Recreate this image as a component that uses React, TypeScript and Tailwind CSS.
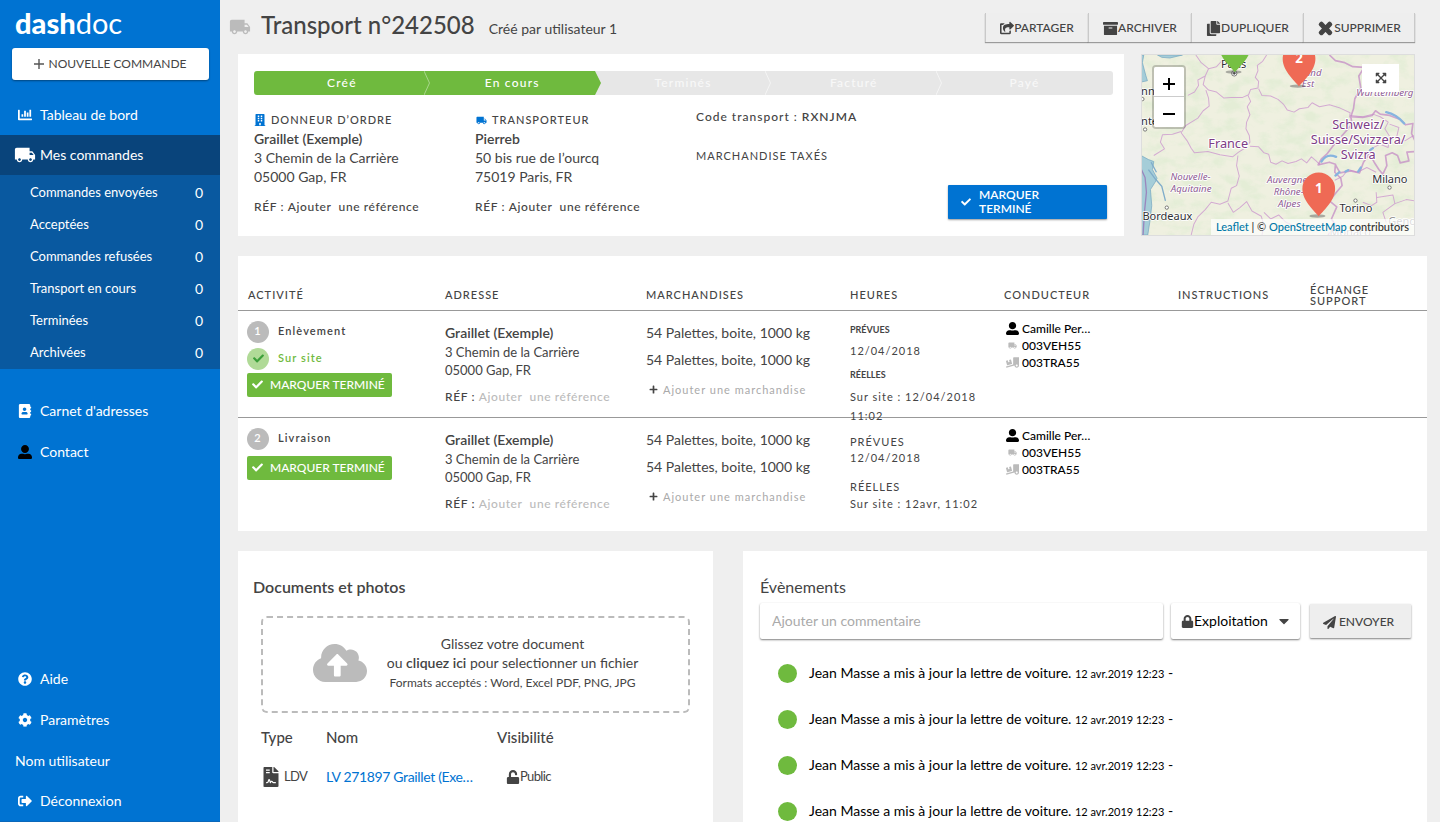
import type { ReactNode } from 'react'
import { clsx } from 'clsx'
import {
  FaAddressBook, FaArchive, FaBuilding, FaCaretDown, FaChartBar, FaCheck, FaCloudUploadAlt, FaCog, FaCopy,
  FaExpandArrowsAlt, FaFileContract, FaLock, FaPaperPlane, FaPlus, FaQuestionCircle, FaShareSquare, FaSignOutAlt,
  FaTimes, FaTruckLoading, FaUnlock, FaUserAlt,
} from 'react-icons/fa'
import { MdLocalShipping } from 'react-icons/md'

const orderLinks = [
  { label: 'Commandes envoyées', count: 0 },
  { label: 'Acceptées', count: 0 },
  { label: 'Commandes refusées', count: 0 },
  { label: 'Transport en cours', count: 0 },
  { label: 'Terminées', count: 0 },
  { label: 'Archivées', count: 0 },
]

const steps = [
  { label: 'Créé', done: true },
  { label: 'En cours', done: true },
  { label: 'Terminés', done: false },
  { label: 'Facturé', done: false },
  { label: 'Payé', done: false },
]

const activities = [
  { id: 1, label: 'Enlèvement', onSite: true },
  { id: 2, label: 'Livraison', onSite: false },
]

const events = [1, 2, 3, 4]

function NavLink({ icon, children, className }: { icon?: ReactNode; children: ReactNode; className?: string }) {
  return (
    <a href="#" className={clsx('flex items-center gap-[5px] px-[15px] text-sm text-white', className)}>
      {icon && <span className="flex w-5 shrink-0 justify-center">{icon}</span>}
      {children}
    </a>
  )
}

function Sidebar() {
  return (
    <aside className="flex h-screen w-[220px] shrink-0 flex-col bg-[#0073d2]">
      <a href="#" className="flex h-11 items-center pl-[15px] text-[29px] leading-none text-white">
        <span className="font-black">dash</span>doc
      </a>
      <button className="mt-1 mr-[11px] ml-3 flex h-8 items-center justify-center gap-1 rounded-[3px] bg-white text-xs text-[#444] shadow-[0_1px_2px_rgba(0,0,0,0.4)]">
        <svg viewBox="0 0 10 10" className="size-2.5" stroke="#555" strokeWidth="1.4"><path d="M5 0v10M0 5h10" /></svg>
        NOUVELLE COMMANDE
      </button>
      <nav className="mt-[15px] flex flex-1 flex-col">
        <NavLink className="h-10" icon={<FaChartBar size={14} />}>Tableau de bord</NavLink>
        <NavLink className="h-10 bg-[#09447b]" icon={<MdLocalShipping size={22} className="shrink-0" />}>Mes commandes</NavLink>
        <ul className="bg-[#0959a0] pt-px pb-px">
          {orderLinks.map(l => (
            <li key={l.label}>
              <a href="#" className="flex h-8 items-center justify-between pt-0.5 pr-[17px] pl-[30px] text-[13px] text-white">
                {l.label}
                <span className="text-sm">{l.count}</span>
              </a>
            </li>
          ))}
        </ul>
        <NavLink className="mt-[21px] h-[41px]" icon={<FaAddressBook size={14} />}>Carnet d'adresses</NavLink>
        <NavLink className="h-[41px]" icon={<FaUserAlt size={14} className="text-black" />}>Contact</NavLink>
        <div className="mt-auto">
          <NavLink className="h-[41px]" icon={<FaQuestionCircle size={14} />}>Aide</NavLink>
          <NavLink className="h-[41px]" icon={<FaCog size={14} />}>Paramètres</NavLink>
          <NavLink className="h-[41px]">Nom utilisateur</NavLink>
          <NavLink className="h-[41px] border-b border-[#0a68ba]" icon={<FaSignOutAlt size={14} />}>Déconnexion</NavLink>
        </div>
      </nav>
    </aside>
  )
}

function ActionButton({ icon, children, className }: { icon: ReactNode; children: ReactNode; className: string }) {
  return (
    <button className={clsx('flex h-[29px] items-center justify-center border-l border-[#c9c9c9] bg-[#eeeeee] pt-0.5 text-xs font-medium text-[#444] shadow-[0_1px_1px_rgba(0,0,0,0.35)]', className)}>
      {icon}
      {children}
    </button>
  )
}

function Header() {
  return (
    <header className="flex h-[54px] shrink-0 items-center pr-3">
      <MdLocalShipping size={22} className="-ml-[9px] shrink-0 text-[#bbb]" />
      <h1 className="ml-2.5 pb-1 text-2xl font-medium text-[#444]">Transport n°242508</h1>
      <p className="ml-3.5 pt-1 text-sm text-[#444]">Créé par utilisateur 1</p>
      <div className="ml-auto flex">
        <ActionButton className="w-[103px]" icon={<FaShareSquare size={14} />}>PARTAGER</ActionButton>
        <ActionButton className="w-[103px]" icon={<FaArchive size={15} />}>ARCHIVER</ActionButton>
        <ActionButton className="w-28" icon={<FaCopy size={15} />}>DUPLIQUER</ActionButton>
        <ActionButton className="w-28 border-r" icon={<FaTimes size={17} stroke="currentColor" strokeWidth={56} />}>SUPPRIMER</ActionButton>
      </div>
    </header>
  )
}

function ProgressBar() {
  return (
    <ol className="grid h-6 grid-cols-[176fr_171fr_171fr_171fr_171fr] overflow-hidden rounded-[3px]">
      {steps.map((s, i) => {
        const last = i === steps.length - 1
        const turning = s.done && !steps[i + 1]?.done
        return (
          <li
            key={s.label}
            className={clsx(
              'relative flex items-center justify-center text-xs font-medium tracking-widest',
              i > 0 && 'pr-1.5',
              s.done ? 'bg-[#6fba3e] text-white' : 'bg-[#e7e7e7] text-[#f8f8f8]',
            )}
          >
            {s.label}
            {!last && (
              <svg viewBox="0 0 6 24" className="absolute top-0 right-0 h-6 w-1.5" fill="none">
                {turning && <path d="M0 0L6 12L0 24H7V0Z" fill="#e7e7e7" />}
                {!turning && <path d="M0 0L5.5 12L0 24" stroke={s.done ? '#a9d68c' : '#f4f4f4'} />}
              </svg>
            )}
          </li>
        )
      })}
    </ol>
  )
}

function Party({ icon, role, name, street, city }: { icon: ReactNode; role: string; name: string; street: string; city: string }) {
  return (
    <div className="text-sm leading-[19px] text-[#444]">
      <h2 className="flex items-center gap-[5px] text-[11px] leading-[18px] font-medium tracking-[1px]">
        <span className="flex w-3 justify-center text-[#0073d2]">{icon}</span>
        {role}
      </h2>
      <p className="font-semibold">{name}</p>
      <p>{street}</p>
      <p>{city}</p>
      <p className="mt-[11px] text-xs leading-[19px] font-medium tracking-wider whitespace-pre">RÉF : <button>Ajouter  une référence</button></p>
    </div>
  )
}

function Summary() {
  return (
    <section className="min-w-0 flex-1 bg-white pt-[17px] pr-[11px] pb-[17px] pl-4">
      <ProgressBar />
      <div className="mt-4 grid grid-cols-[221px_221px_1fr_165px] text-[#444]">
        <Party icon={<FaBuilding size={12} />} role="DONNEUR D’ORDRE" name="Graillet (Exemple)" street="3 Chemin de la Carrière" city="05000 Gap, FR" />
        <Party icon={<MdLocalShipping size={11} />} role="TRANSPORTEUR" name="Pierreb" street="50 bis rue de l’ourcq" city="75019 Paris, FR" />
        <div>
          <p className="-mt-1 text-xs leading-[19px] font-medium tracking-[1px]">Code transport : <span className="font-semibold">RXNJMA</span></p>
          <p className="mt-5 text-[11px] leading-[19px] tracking-[1px]">MARCHANDISE TAXÉS</p>
        </div>
        <button className="mt-[74px] flex h-[34px] w-[159px] items-center gap-2 rounded-[1px] bg-[#0073d2] px-[13px] text-left text-xs leading-[14px] font-semibold text-white shadow-[0_1px_2px_rgba(0,0,0,0.4)]">
          <FaCheck size={10} className="shrink-0" />
          <span className="w-20">MARQUER TERMINÉ</span>
        </button>
      </div>
    </section>
  )
}

function Pin({ x, y, color, label }: { x: number; y: number; color: string; label?: string }) {
  return (
    <g transform={`translate(${x} ${y})`}>
      <ellipse cx="-4" cy="-1" rx="24" ry="5" fill="#555" opacity=".45" />
      <path d="M0 0C-8 -12 -49 -45 -49 -82A49 49 0 0 1 49 -82C49 -45 8 -12 0 0Z" fill={color} />
      {label && <text y="-69" textAnchor="middle" fontSize="40" fontWeight="700" fill="#fff">{label}</text>}
    </g>
  )
}

function RouteMap() {
  return (
    <section className="relative w-[274px] overflow-hidden border border-[#ddd] font-['Noto_Sans',sans-serif]">
      <svg viewBox="36 29 820 539" preserveAspectRatio="xMidYMid slice" className="absolute inset-0 size-full">
        <defs>
          <filter id="relief" x="0" y="0" width="100%" height="100%">
            <feTurbulence type="fractalNoise" baseFrequency="0.018 0.03" numOctaves="4" seed="7" />
            <feColorMatrix values="0 0 0 0 .7  0 0 0 0 .83  0 0 0 0 .62  0 3.4 0 0 -1.45" />
          </filter>
        </defs>
        <rect x="36" y="29" width="820" height="539" fill="#eff0e0" />
        <rect x="36" y="29" width="820" height="539" filter="url(#relief)" opacity=".5" />
        <g fill="#a5cdd8" stroke="#6fa3c0" strokeWidth="2">
          <path d="M36 29H44L40 52L50 90L55 106L36 110Z" />
          <path d="M85 29L98 36L122 38L160 29Z" />
          <path d="M36 330L58 342L74 348L70 372L84 398L78 410L64 432L68 480L62 530L56 568H36Z" />
        </g>
        <path d="M58 372L80 402L98 422L109 466M66 350L82 380" fill="none" stroke="#7facca" strokeWidth="4" />
        <path d="M36 370L48 396L52 440L46 500L42 568" fill="none" stroke="#9a86bd" strokeWidth="4" />
        <g fill="none" stroke="#cf9fd0" strokeWidth="3" strokeLinejoin="round" opacity=".85">
          <path d="M200 29L216 52L238 70L228 92L206 104L208 120L196 140L176 150M238 70L262 64L280 44L310 34L340 29" />
          <path d="M228 92L222 118L238 134L262 140L284 158L306 156L340 156L358 148L364 132L386 128L388 108L378 96L386 76L384 60L400 48L412 29" />
          <path d="M388 130L398 150L424 152L446 162L462 176L474 194L494 200L510 190L536 186L548 172L570 184L600 178L632 188L662 202L660 216" />
          <path d="M356 150L364 168L354 184L362 208L352 230L350 250L360 270L362 290L350 306L328 320L310 334L272 328L236 318L196 322L186 308L174 286L156 262L170 240L206 218L222 196L240 182L238 158L230 134" />
          <path d="M156 258L130 266L100 268L94 290L106 310L74 330" />
          <path d="M362 302L388 304L404 322L418 326L424 350L440 356L458 346L476 354L500 348L516 340L532 352L546 334L560 346L572 358" />
          <path d="M326 330L322 360L330 392L322 420L306 428L296 466L272 476L246 470L228 492L206 514L194 536L186 568M296 472L312 500L332 486L352 468L368 496L396 512L404 540L398 568" />
          <path d="M404 500L424 520L448 508L470 530L500 544M616 404L640 392L656 372L684 380L712 366L740 380M740 440L742 470L726 480L700 470M742 456L790 448L796 474L830 462L856 466M796 474L760 500L770 530" />
          <path d="M662 210L700 214L730 206L752 214L776 230L766 250L780 272L776 306L752 296L724 310L706 330M780 236L808 246L800 280L826 286L852 270" />
        </g>
        <g fill="none" stroke="#c58cc6" strokeWidth="5" strokeLinejoin="round" opacity=".75">
          <path d="M600 29L618 46L646 52L670 64L704 66L688 92L694 128L676 160L672 190L664 214L700 216L728 210L738 196L752 206L780 210L812 222L828 238L850 234L846 264L856 286" />
          <path d="M664 214L668 236L640 268L610 302L592 326L576 340L566 358L600 350L618 356L616 380L634 398L638 420L616 446L600 466L622 484L606 520L620 540L596 568" />
          <path d="M618 358L632 382L664 376L690 382L702 350L720 324L734 350L748 372L760 386L772 360L768 330L788 322L804 330L812 352L838 346L832 320L856 318" />
        </g>
        <g fill="none" stroke="#86b4df" strokeWidth="7" strokeLinecap="round">
          <path d="M576 348Q592 322 620 334M770 200Q800 206 824 234M618 390L630 380M648 378L656 374M686 378L694 366M722 314L730 308" />
        </g>
        <g fontSize="33" fill="#2f2f33" stroke="#fff" strokeWidth="5" paintOrder="stroke" strokeLinejoin="round">
          <text x="275" y="67">Paris</text>
          <text x="36" y="148">nne</text>
          <text x="36" y="240">nte</text>
          <text x="40" y="523">Bordeaux</text>
          <text x="728" y="413">Milano</text>
          <text x="630" y="499">Torino</text>
          <text x="776" y="538" fill="#888">Geno</text>
          <text x="600" y="572" fill="#999">Monaco</text>
        </g>
        <g fontStyle="italic" fontSize="29" fill="#8d5a92" stroke="#fff" strokeWidth="5" paintOrder="stroke" strokeLinejoin="round" textAnchor="middle">
          <text x="536" y="91">Grand</text>
          <text x="536" y="126">Est</text>
          <text x="766" y="152">Württemberg</text>
          <text x="184" y="403">Nouvelle-</text>
          <text x="186" y="439">Aquitaine</text>
          <text x="478" y="413">Auvergne-</text>
          <text x="478" y="449">Rhône-</text>
          <text x="480" y="485">Alpes</text>
        </g>
        <g fontSize="38" fill="#7d3c86" stroke="#fff" strokeWidth="6" paintOrder="stroke" strokeLinejoin="round" textAnchor="middle">
          <text x="297" y="307">France</text>
          <text x="686" y="251">Schweiz/</text>
          <text x="686" y="296">Suisse/Svizzera/</text>
          <text x="686" y="341">Svizra</text>
        </g>
        <g fill="#fff" stroke="#444" strokeWidth="2">
          <circle cx="315" cy="84" r="8" />
          <circle cx="315" cy="84" r="3" fill="#444" />
          <circle cx="40" cy="161" r="5" />
          <circle cx="48" cy="252" r="5" />
          <circle cx="113" cy="486" r="5" />
          <circle cx="780" cy="426" r="5" />
          <circle cx="678" cy="465" r="5" />
        </g>
        <Pin x={317} y={81} color="#76c043" />
        <Pin x={509} y={123} color="#ef6a55" label="2" />
        <Pin x={568} y={512} color="#ef6a55" label="1" />
      </svg>
      <div className="absolute top-2.5 left-2.5 flex w-[34px] flex-col rounded border-2 border-black/20 text-black">
        <button aria-label="Zoom avant" className="flex h-[30px] items-center justify-center rounded-t-[2px] border-b border-[#ccc] bg-white">
          <svg viewBox="0 0 12 12" className="mt-1 size-3" stroke="currentColor" strokeWidth="2"><path d="M6 0v12M0 6h12" /></svg>
        </button>
        <button aria-label="Zoom arrière" className="flex h-[30px] items-center justify-center rounded-b-[2px] bg-white">
          <svg viewBox="0 0 12 12" className="mt-1 size-3" stroke="currentColor" strokeWidth="2"><path d="M0 6h12" /></svg>
        </button>
      </div>
      <button aria-label="Plein écran" className="absolute top-[9px] right-[15px] flex h-7 w-[37px] items-center justify-center bg-white text-[#444]">
        <FaExpandArrowsAlt size={12} />
      </button>
      <p className="absolute right-0 bottom-0 bg-white/70 px-[5px] font-[Lato,sans-serif] text-[11px] leading-4 font-medium whitespace-nowrap text-[#333]">
        <a href="#" className="text-[#0078a8]">Leaflet</a> | © <a href="#" className="text-[#0078a8]">OpenStreetMap</a> contributors
      </p>
    </section>
  )
}

function Badge({ children, className }: { children: ReactNode; className: string }) {
  return <span className={clsx('mr-[9px] flex size-[22px] items-center justify-center rounded-full text-[11px]', className)}>{children}</span>
}

function ActivityRow({ id, label, onSite }: { id: number; label: string; onSite: boolean }) {
  return (
    <tr className="border-t border-[#999] align-top">
      <td className="h-[107px] pt-2.5 pr-2.5 pl-[9px]">
        <p className="flex items-center text-[11px] font-semibold tracking-widest">
          <Badge className="bg-[#bbb] text-white">{id}</Badge>{label}
        </p>
        {onSite && (
          <p className="mt-[5px] flex items-center text-[11px] font-semibold tracking-widest text-[#6fba3e]">
            <Badge className="bg-[#b0da97] text-[#3c9f3a]"><FaCheck size={11} /></Badge>Sur site
          </p>
        )}
        <button className={clsx('flex h-6 w-[145px] items-center gap-[7px] rounded-[2px] bg-[#6fba3e] pl-[5px] text-xs font-medium text-white', onSite ? 'mt-[3px]' : 'mt-1.5')}>
          <FaCheck size={11} />MARQUER TERMINÉ
        </button>
      </td>
      <td className="px-2.5 pt-3 text-[13px] leading-[18px]">
        <p className="text-sm leading-5 font-semibold">Graillet (Exemple)</p>
        <p>3 Chemin de la Carrière</p>
        <p>05000 Gap, FR</p>
        <p className="mt-[9px] text-xs leading-[18px] font-medium tracking-wider whitespace-pre">RÉF : <button className="text-[#bbb]">Ajouter  une référence</button></p>
      </td>
      <td className="px-2.5 pt-3 text-sm leading-5">
        <p>54 Palettes, boite, 1000 kg</p>
        <p className="mt-[7px]">54 Palettes, boite, 1000 kg</p>
        <button className="mt-2.5 ml-[3px] flex items-center gap-[5px] text-[11px] leading-5 tracking-[1px] text-[#aaa]">
          <FaPlus size={9} className="text-[#444]" />Ajouter une marchandise
        </button>
      </td>
      <td className="px-2.5 text-[11px] leading-[18px] tracking-[1px]">
        {onSite ? (
          // the second date line runs past the row, over the rule below it
          <div className="h-24 pt-2.5">
            <p className="text-[9px] leading-[18px] font-bold tracking-normal">PRÉVUES</p>
            <p className="mt-[3px]">12/04/2018</p>
            <p className="mt-1.5 text-[9px] leading-[18px] font-bold tracking-normal">RÉELLES</p>
            <p className="mt-[3px] leading-[19px]">Sur site : 12/04/2018 11:02</p>
          </div>
        ) : (
          <div className="h-24 pt-[15px]">
            <p>PRÉVUES</p>
            <p className="-mt-0.5">12/04/2018</p>
            <p className="mt-[11px]">RÉELLES</p>
            <p className="-mt-px whitespace-nowrap">Sur site : 12avr, 11:02</p>
          </div>
        )}
      </td>
      <td className="px-3 pt-[9px] text-xs leading-[17px] font-medium text-black">
        <p className="flex items-center gap-[3px]"><FaUserAlt size={13} />Camille Per…</p>
        <p className="flex items-center gap-[3px]"><span className="flex w-[13px] justify-center text-[#bbb]"><MdLocalShipping size={9} /></span>003VEH55</p>
        <p className="flex items-center gap-[3px]"><FaTruckLoading size={13} className="text-[#bbb]" />003TRA55</p>
      </td>
      <td />
      <td />
    </tr>
  )
}

function ActivityTable() {
  return (
    <section className="mt-5 shrink-0 bg-white pb-[7px]">
      <table className="w-full table-fixed text-left text-[#444]">
        <colgroup>
          <col className="w-[197px]" />
          <col className="w-[201px]" />
          <col className="w-[204px]" />
          <col className="w-[154px]" />
          <col className="w-[174px]" />
          <col className="w-[132px]" />
          <col className="w-[127px]" />
        </colgroup>
        <thead>
          <tr className="h-[54px] text-[11px] leading-[11px] tracking-[1px]">
            {['ACTIVITÉ', 'ADRESSE', 'MARCHANDISES', 'HEURES', 'CONDUCTEUR', 'INSTRUCTIONS'].map(h => (
              <th key={h} className="px-2.5 pt-6 font-medium">{h}</th>
            ))}
            <th className="px-2.5 pt-6 font-medium"><span className="block w-16">ÉCHANGE SUPPORT</span></th>
          </tr>
        </thead>
        <tbody>
          {activities.map(a => <ActivityRow key={a.id} {...a} />)}
        </tbody>
      </table>
    </section>
  )
}

function Documents() {
  return (
    <section className="bg-white pt-6 pr-[23px] pl-[15px] text-[#444]">
      <h2 className="text-base font-semibold">Documents et photos</h2>
      <label className="mt-[17px] ml-2 flex h-[97px] cursor-pointer items-center justify-center gap-5 rounded-md border-2 border-dashed border-[#bbb] pb-[3px] text-center text-sm leading-[19px]">
        <input type="file" className="sr-only" />
        <FaCloudUploadAlt size={54} className="shrink-0 text-[#bbb]" />
        <span>
          Glissez votre document<br />
          ou <span className="font-semibold">cliquez ici</span> pour selectionner un fichier<br />
          <span className="text-xs leading-[19px]">Formats acceptés : Word, Excel PDF, PNG, JPG</span>
        </span>
      </label>
      <table className="mt-3 ml-2 text-left">
        <thead>
          <tr className="h-6 text-[15px]">
            <th className="w-[65px] font-medium">Type</th>
            <th className="w-[171px] font-medium">Nom</th>
            <th className="font-medium">Visibilité</th>
          </tr>
        </thead>
        <tbody>
          <tr className="h-14 text-[13px] tracking-tighter">
            <td><span className="flex items-center gap-[3px]"><FaFileContract size={20} />LDV</span></td>
            <td className="text-sm tracking-tight"><a href="#" className="text-[#0073d2]">LV 271897 Graillet (Exe…</a></td>
            <td><span className="flex items-center pl-[9px]"><FaUnlock size={14} />Public</span></td>
          </tr>
        </tbody>
      </table>
    </section>
  )
}

function Events() {
  return (
    <section className="bg-white pt-6 pr-4 pl-[17px] text-[#444]">
      <h2 className="text-base">Évènements</h2>
      <form className="mt-1 flex items-center" onSubmit={e => e.preventDefault()}>
        <input
          aria-label="Commentaire"
          placeholder="Ajouter un commentaire"
          className="h-9 min-w-0 flex-1 rounded-[2px] bg-white px-3 pb-0.5 text-sm shadow-[0_1px_2px_rgba(0,0,0,0.5)] outline-none placeholder:text-[#aaa]"
        />
        <label className="relative ml-2 flex h-9 w-[129px] items-center rounded-[2px] pl-2.5 text-black shadow-[0_1px_2px_rgba(0,0,0,0.5)]">
          <FaLock size={13} className="text-[#444]" />
          <select aria-label="Visibilité du commentaire" className="flex-1 appearance-none bg-transparent text-sm outline-none">
            <option>Exploitation</option>
          </select>
          <FaCaretDown size={16} className="pointer-events-none absolute right-2 text-[#444]" />
        </label>
        <button className="ml-2.5 flex h-[34px] w-[101px] items-center justify-center gap-[3px] rounded-[1px] bg-[#eee] pt-0.5 pr-1 text-xs font-medium shadow-[0_1px_2px_rgba(0,0,0,0.5)]">
          <FaPaperPlane size={13} />ENVOYER
        </button>
      </form>
      <ul className="mt-[11px]">
        {events.map(e => (
          <li key={e} className="flex h-[46px] items-center gap-3 pl-[18px] text-sm text-black">
            <span className="size-[19px] rounded-full bg-[#6fba3e]" />
            <span>Jean Masse a mis à jour la lettre de voiture. <time className="text-[11px]">12 avr.2019 12:23</time> -</span>
          </li>
        ))}
      </ul>
    </section>
  )
}

export default function App() {
  return (
    <div className="flex h-screen overflow-hidden bg-[#efefef] font-[Lato,sans-serif]">
      <Sidebar />
      <main className="flex min-w-0 flex-1 flex-col pr-[13px] pl-[18px]">
        <Header />
        <div className="flex shrink-0 gap-[17px] pr-3">
          <Summary />
          <RouteMap />
        </div>
        <ActivityTable />
        <div className="mt-5 grid flex-1 grid-cols-[475fr_684fr] gap-[30px]">
          <Documents />
          <Events />
        </div>
      </main>
    </div>
  )
}
